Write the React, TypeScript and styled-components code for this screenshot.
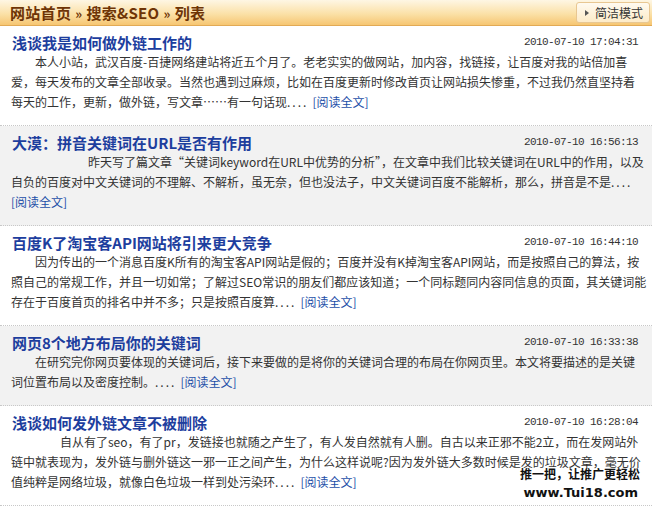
import styled, { createGlobalStyle } from 'styled-components';

const GlobalStyle = createGlobalStyle`
  html, body {
    margin: 0;
    padding: 0;
    background: #ffffff;
  }
  body {
    font-family: "Noto Sans CJK SC", "DejaVu Sans", sans-serif;
    font-size: 12px;
    color: #333333;
  }
`;

const Page = styled.div`
  position: relative;
  width: 652px;
  height: 506px;
  overflow: hidden;
  background: #ffffff;
`;

const Header = styled.div`
  height: 26px;
  box-sizing: border-box;
  display: flex;
  align-items: center;
  justify-content: space-between;
  padding: 0 2px 0 10px;
  background: linear-gradient(#fef6e4, #fbe1a8 55%, #f6c672);
  border-bottom: 1px solid #e2aa55;
`;

const Crumbs = styled.div`
  font-size: 15px;
  font-weight: bold;
  color: #6e3406;
  letter-spacing: 0.3px;
`;

const Sep = styled.span`
  margin: 0 4px;
  font-size: 13px;
`;

const ModeButton = styled.button`
  height: 21px;
  padding: 0 6px 0 8px;
  display: flex;
  align-items: center;
  gap: 6px;
  font-family: inherit;
  font-size: 12px;
  color: #333333;
  background: linear-gradient(#fffaf0, #fdebc8);
  border: 1px solid #e8c792;
  border-radius: 3px;
`;

const Arrow = styled.span`
  width: 0;
  height: 0;
  border-top: 3px solid transparent;
  border-bottom: 3px solid transparent;
  border-left: 4px solid #555555;
`;

const Item = styled.div<{ $alt?: boolean }>`
  padding: 6px 14px 13px 11px;
  background: ${({ $alt }) => ($alt ? '#f2f2f2' : '#ffffff')};
  border-bottom: 1px dotted #c8c8c8;
`;

const TitleRow = styled.div`
  height: 20px;
  display: flex;
  align-items: center;
  justify-content: space-between;
`;

const Title = styled.a`
  padding-left: 1px;
  font-size: 15px;
  font-weight: bold;
  color: #1d3e9e;
  text-decoration: none;
`;

const Time = styled.span`
  font-family: "Liberation Mono", "DejaVu Sans Mono", monospace;
  font-size: 11px;
  letter-spacing: -0.6px;
  color: #333333;
`;

const Body = styled.p<{ $indent: number }>`
  margin: 0;
  line-height: 20px;
  white-space: nowrap;
  text-indent: ${({ $indent }) => $indent}px;
`;

const Dots = styled.span`
  letter-spacing: 2px;
  margin-right: 4px;
`;

const More = styled.a`
  color: #1d4fa8;
  text-decoration: none;
`;

const Mark = styled.div`
  position: absolute;
  right: 12px;
  bottom: 6px;
  display: flex;
  flex-direction: column;
  align-items: flex-end;
  gap: 4px;
  color: #111111;
  font-weight: bold;
`;

const MarkSlogan = styled.span`
  font-size: 12px;
  line-height: 14px;
`;

const MarkUrl = styled.span`
  font-family: "DejaVu Sans", "Liberation Sans", sans-serif;
  font-size: 13px;
  line-height: 15px;
  margin-right: 2px;
`;

type Post = {
  title: string;
  time: string;
  indent: number;
  lines: string[];
};

const posts: Post[] = [
  {
    title: '浅谈我是如何做外链工作的',
    time: '2010-07-10 17:04:31',
    indent: 24,
    lines: [
      '本人小站，武汉百度-百捷网络建站将近五个月了。老老实实的做网站，加内容，找链接，让百度对我的站倍加喜',
      '爱，每天发布的文章全部收录。当然也遇到过麻烦，比如在百度更新时修改首页让网站损失惨重，不过我仍然直坚持着',
      '每天的工作，更新，做外链，写文章……有一句话现',
    ],
  },
  {
    title: '大漠：拼音关键词在URL是否有作用',
    time: '2010-07-10 16:56:13',
    indent: 77,
    lines: [
      '昨天写了篇文章“关键词keyword在URL中优势的分析”，在文章中我们比较关键词在URL中的作用，以及',
      '自负的百度对中文关键词的不理解、不解析，虽无奈，但也没法子，中文关键词百度不能解析，那么，拼音是不是',
      '',
    ],
  },
  {
    title: '百度K了淘宝客API网站将引来更大竞争',
    time: '2010-07-10 16:44:10',
    indent: 24,
    lines: [
      '因为传出的一个消息百度K所有的淘宝客API网站是假的；百度并没有K掉淘宝客API网站，而是按照自己的算法，按',
      '照自己的常规工作，并且一切如常；了解过SEO常识的朋友们都应该知道；一个同标题同内容同信息的页面，其关键词能',
      '存在于百度首页的排名中并不多；只是按照百度算',
    ],
  },
  {
    title: '网页8个地方布局你的关键词',
    time: '2010-07-10 16:33:38',
    indent: 24,
    lines: [
      '在研究完你网页要体现的关键词后，接下来要做的是将你的关键词合理的布局在你网页里。本文将要描述的是关键',
      '词位置布局以及密度控制。',
    ],
  },
  {
    title: '浅谈如何发外链文章不被删除',
    time: '2010-07-10 16:28:04',
    indent: 49,
    lines: [
      '自从有了seo，有了pr，发链接也就随之产生了，有人发自然就有人删。自古以来正邪不能2立，而在发网站外',
      '链中就表现为，发外链与删外链这一邪一正之间产生，为什么这样说呢?因为发外链大多数时候是发的垃圾文章，毫无价',
      '值纯粹是网络垃圾，就像白色垃圾一样到处污染环',
    ],
  },
];

export default function App() {
  return (
    <Page>
      <GlobalStyle />
      <Header>
        <Crumbs>
          网站首页<Sep>»</Sep>搜索&amp;SEO<Sep>»</Sep>列表
        </Crumbs>
        <ModeButton>
          <Arrow />
          简洁模式
        </ModeButton>
      </Header>
      {posts.map((post, i) => {
        const last = post.lines.length - 1;
        return (
          <Item key={post.time} $alt={i % 2 === 1}>
            <TitleRow>
              <Title href="#">{post.title}</Title>
              <Time>{post.time}</Time>
            </TitleRow>
            {post.lines.map((line, j) => {
              // the "more" link follows the text; in post 2 it sits on its own line
              const tail = post.lines[last] === '' ? j === last - 1 : j === last;
              return (
                <Body key={j} $indent={j === 0 ? post.indent : 0}>
                  {line}
                  {tail && <Dots>....</Dots>}
                  {j === last && <More href="#">[阅读全文]</More>}
                </Body>
              );
            })}
          </Item>
        );
      })}
      <Mark>
        <MarkSlogan>推一把，让推广更轻松</MarkSlogan>
        <MarkUrl>www.Tui18.com</MarkUrl>
      </Mark>
    </Page>
  );
}
